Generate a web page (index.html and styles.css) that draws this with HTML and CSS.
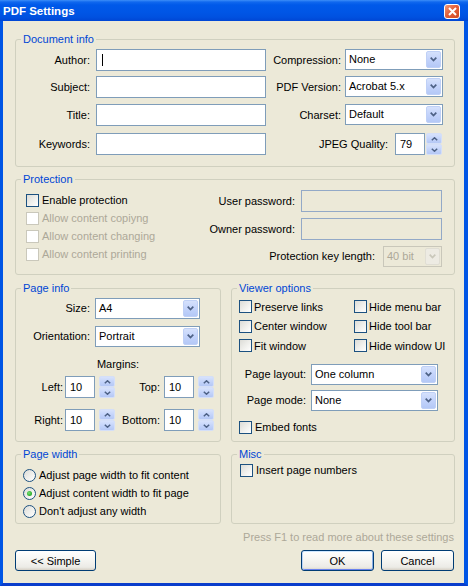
FILE: index.html
```html
<!DOCTYPE html>
<html>
<head>
<meta charset="utf-8">
<title>PDF Settings</title>
<link rel="stylesheet" href="styles.css">
</head>
<body>
<div class="window">
  <div class="titlebar">
    <span class="title">PDF Settings</span>
    <span class="close"><svg width="9" height="9" viewBox="0 0 9 9"><path d="M1 1 L8 8 M8 1 L1 8" stroke="#fff" stroke-width="2" fill="none"/></svg></span>
  </div>
  <div class="frame">
    <fieldset class="group">
      <legend>Document info</legend>
      <div class="doc-grid">
        <span class="lbl l1">Author:</span>
        <div class="edit"><span class="caret"></span></div>
        <span class="lbl l2">Compression:</span>
        <div class="combo"><span class="val">None</span><span class="drop"><svg width="7" height="5" viewBox="0 0 7 5"><path d="M0.7 0.7 L3.5 3.6 L6.3 0.7" stroke="#4D6185" stroke-width="1.7" fill="none"/></svg></span></div>

        <span class="lbl l1">Subject:</span>
        <div class="edit"></div>
        <span class="lbl l2">PDF Version:</span>
        <div class="combo"><span class="val">Acrobat 5.x</span><span class="drop"><svg width="7" height="5" viewBox="0 0 7 5"><path d="M0.7 0.7 L3.5 3.6 L6.3 0.7" stroke="#4D6185" stroke-width="1.7" fill="none"/></svg></span></div>

        <span class="lbl l1">Title:</span>
        <div class="edit"></div>
        <span class="lbl l2">Charset:</span>
        <div class="combo"><span class="val">Default</span><span class="drop"><svg width="7" height="5" viewBox="0 0 7 5"><path d="M0.7 0.7 L3.5 3.6 L6.3 0.7" stroke="#4D6185" stroke-width="1.7" fill="none"/></svg></span></div>

        <span class="lbl l1">Keywords:</span>
        <div class="edit"></div>
        <div class="jpeg">
          <span class="lbl">JPEG Quality:</span>
          <div class="edit num">79</div>
          <div class="spin">
            <span class="sb"><svg width="7" height="4" viewBox="0 0 7 4"><path d="M0.8 3.3 L3.5 0.8 L6.2 3.3" stroke="#4D6185" stroke-width="1.5" fill="none"/></svg></span>
            <span class="sb"><svg width="7" height="4" viewBox="0 0 7 4"><path d="M0.8 0.7 L3.5 3.2 L6.2 0.7" stroke="#4D6185" stroke-width="1.5" fill="none"/></svg></span>
          </div>
        </div>
      </div>
    </fieldset>

    <fieldset class="group prot">
      <legend>Protection</legend>
      <div class="prot-body">
        <div class="prot-left">
          <div class="chk"><span class="cb"></span><span>Enable protection</span></div>
          <div class="chk dis"><span class="cb"></span><span>Allow content copiyng</span></div>
          <div class="chk dis"><span class="cb"></span><span>Allow content changing</span></div>
          <div class="chk dis"><span class="cb"></span><span>Allow content printing</span></div>
        </div>
        <div class="prot-right">
          <span class="lbl">User password:</span>
          <div class="edit disabled"></div>
          <span class="lbl">Owner password:</span>
          <div class="edit disabled"></div>
          <div class="keylen">
            <span class="lbl">Protection key length:</span>
            <div class="combo disabled"><span class="val">40 bit</span><span class="drop"><svg width="7" height="5" viewBox="0 0 7 5"><path d="M0.7 0.7 L3.5 3.6 L6.3 0.7" stroke="#C9C7BA" stroke-width="1.7" fill="none"/></svg></span></div>
          </div>
        </div>
      </div>
    </fieldset>

    <div class="row mid">
      <fieldset class="group">
        <legend>Page info</legend>
        <div class="pi-body">
          <div class="pi-grid">
            <span class="lbl">Size:</span>
            <div class="combo"><span class="val">A4</span><span class="drop"><svg width="7" height="5" viewBox="0 0 7 5"><path d="M0.7 0.7 L3.5 3.6 L6.3 0.7" stroke="#4D6185" stroke-width="1.7" fill="none"/></svg></span></div>
            <span class="lbl">Orientation:</span>
            <div class="combo"><span class="val">Portrait</span><span class="drop"><svg width="7" height="5" viewBox="0 0 7 5"><path d="M0.7 0.7 L3.5 3.6 L6.3 0.7" stroke="#4D6185" stroke-width="1.7" fill="none"/></svg></span></div>
          </div>
          <div class="margins-title">Margins:</div>
          <div class="margins-grid">
            <span class="lbl">Left:</span>
            <div class="edit num">10</div>
            <div class="spin">
              <span class="sb"><svg width="7" height="4" viewBox="0 0 7 4"><path d="M0.8 3.3 L3.5 0.8 L6.2 3.3" stroke="#4D6185" stroke-width="1.5" fill="none"/></svg></span>
              <span class="sb"><svg width="7" height="4" viewBox="0 0 7 4"><path d="M0.8 0.7 L3.5 3.2 L6.2 0.7" stroke="#4D6185" stroke-width="1.5" fill="none"/></svg></span>
            </div>
            <span class="lbl">Top:</span>
            <div class="edit num">10</div>
            <div class="spin">
              <span class="sb"><svg width="7" height="4" viewBox="0 0 7 4"><path d="M0.8 3.3 L3.5 0.8 L6.2 3.3" stroke="#4D6185" stroke-width="1.5" fill="none"/></svg></span>
              <span class="sb"><svg width="7" height="4" viewBox="0 0 7 4"><path d="M0.8 0.7 L3.5 3.2 L6.2 0.7" stroke="#4D6185" stroke-width="1.5" fill="none"/></svg></span>
            </div>
            <span class="lbl">Right:</span>
            <div class="edit num">10</div>
            <div class="spin">
              <span class="sb"><svg width="7" height="4" viewBox="0 0 7 4"><path d="M0.8 3.3 L3.5 0.8 L6.2 3.3" stroke="#4D6185" stroke-width="1.5" fill="none"/></svg></span>
              <span class="sb"><svg width="7" height="4" viewBox="0 0 7 4"><path d="M0.8 0.7 L3.5 3.2 L6.2 0.7" stroke="#4D6185" stroke-width="1.5" fill="none"/></svg></span>
            </div>
            <span class="lbl">Bottom:</span>
            <div class="edit num">10</div>
            <div class="spin">
              <span class="sb"><svg width="7" height="4" viewBox="0 0 7 4"><path d="M0.8 3.3 L3.5 0.8 L6.2 3.3" stroke="#4D6185" stroke-width="1.5" fill="none"/></svg></span>
              <span class="sb"><svg width="7" height="4" viewBox="0 0 7 4"><path d="M0.8 0.7 L3.5 3.2 L6.2 0.7" stroke="#4D6185" stroke-width="1.5" fill="none"/></svg></span>
            </div>
          </div>
        </div>
      </fieldset>

      <fieldset class="group">
        <legend>Viewer options</legend>
        <div class="vo-body">
          <div class="vo-checks">
            <div class="chk"><span class="cb"></span><span>Preserve links</span></div>
            <div class="chk"><span class="cb"></span><span>Hide menu bar</span></div>
            <div class="chk"><span class="cb"></span><span>Center window</span></div>
            <div class="chk"><span class="cb"></span><span>Hide tool bar</span></div>
            <div class="chk"><span class="cb"></span><span>Fit window</span></div>
            <div class="chk"><span class="cb"></span><span>Hide window UI</span></div>
          </div>
          <div class="vo-combos">
            <span class="lbl">Page layout:</span>
            <div class="combo"><span class="val">One column</span><span class="drop"><svg width="7" height="5" viewBox="0 0 7 5"><path d="M0.7 0.7 L3.5 3.6 L6.3 0.7" stroke="#4D6185" stroke-width="1.7" fill="none"/></svg></span></div>
            <span class="lbl">Page mode:</span>
            <div class="combo"><span class="val">None</span><span class="drop"><svg width="7" height="5" viewBox="0 0 7 5"><path d="M0.7 0.7 L3.5 3.6 L6.3 0.7" stroke="#4D6185" stroke-width="1.7" fill="none"/></svg></span></div>
          </div>
          <div class="chk embed"><span class="cb"></span><span>Embed fonts</span></div>
        </div>
      </fieldset>
    </div>

    <div class="row bot">
      <fieldset class="group">
        <legend>Page width</legend>
        <div class="pw-body">
          <div class="rad"><span class="rb"></span><span>Adjust page width to fit content</span></div>
          <div class="rad"><span class="rb on"></span><span>Adjust content width to fit page</span></div>
          <div class="rad"><span class="rb"></span><span>Don't adjust any width</span></div>
        </div>
      </fieldset>
      <fieldset class="group">
        <legend>Misc</legend>
        <div class="misc-body">
          <div class="chk"><span class="cb"></span><span>Insert page numbers</span></div>
        </div>
      </fieldset>
    </div>

    <div class="hint">Press F1 to read more about these settings</div>

    <div class="buttons">
      <button class="btn simple">&lt;&lt; Simple</button>
      <div class="btn-right">
        <button class="btn ok">OK</button>
        <button class="btn">Cancel</button>
      </div>
    </div>
  </div>
</div>
</body>
</html>
```

FILE: styles.css
```css
* { box-sizing: border-box; }

body {
  margin: 0;
  font: 11px "Liberation Sans", Arial, sans-serif;
  color: #000;
  background: #ECE9D8;
}

.window {
  width: 468px;
  height: 586px;
  display: flex;
  flex-direction: column;
  background: #ECE9D8;
}

/* ---------- title bar ---------- */
.titlebar {
  flex: none;
  height: 21px;
  display: flex;
  align-items: center;
  padding: 1px 0 0 3px;
  background: linear-gradient(180deg, #3D8EF8 0px, #1068EE 2px, #0059E9 5px, #0056E6 12px, #0051E0 17px, #0046D4 21px);
}

.title {
  color: #fff;
  font-weight: bold;
  font-size: 11.5px;
}

.close {
  margin-left: auto;
  margin-right: 8px;
  width: 16px;
  height: 15px;
  border: 1px solid #fff;
  border-radius: 3px;
  background: linear-gradient(135deg, #F09A78 0%, #E4603A 45%, #D04A22 100%);
  display: flex;
  align-items: center;
  justify-content: center;
}

/* ---------- frame / client ---------- */
.frame {
  flex: 1;
  display: flex;
  flex-direction: column;
  border-left: 3px solid #0055E5;
  border-right: 4px solid #0055E5;
  border-bottom: 3px solid #0A3DCC;
  padding: 12px 9px 0 12px;
}

/* ---------- group boxes ---------- */
.group {
  margin: 0;
  padding: 0;
  min-inline-size: 0;
  border: 1px solid #D0D0BF;
  border-radius: 3px;
}

.group legend {
  margin-left: 5px;
  padding: 0 2px;
  color: #0046D5;
  line-height: 13px;
  font-size: 11px;
}

.lbl {
  white-space: nowrap;
  line-height: 22px;
  text-align: right;
}

/* ---------- fields ---------- */
.edit {
  height: 22px;
  border: 1px solid #7F9DB9;
  background: #fff;
  display: flex;
  align-items: center;
  padding-left: 5px;
}

.edit.num { padding-left: 4px; }

.edit.disabled {
  background: #ECE9D8;
  border-color: #93A9C7;
}

.caret {
  width: 1px;
  height: 12px;
  background: #000;
}

.combo {
  height: 21px;
  border: 1px solid #7F9DB9;
  background: #fff;
  display: flex;
  align-items: stretch;
}

.combo .val {
  flex: 1;
  padding-left: 3px;
  line-height: 19px;
  white-space: nowrap;
  overflow: hidden;
}

.drop {
  flex: none;
  width: 15px;
  margin: 1px 1px 1px 0;
  border: 1px solid #BFD0F6;
  border-radius: 2px;
  background: linear-gradient(180deg, #D5E1FC 0%, #C3D3FB 50%, #B4C8F6 100%);
  display: flex;
  align-items: center;
  justify-content: center;
}

.combo.disabled {
  border-color: #C9C7BA;
  background: #ECE9D8;
  color: #ACA899;
}

.combo.disabled .drop {
  border-color: #E0DED4;
  background: #EDEBE3;
}

.spin {
  width: 16px;
  height: 22px;
  display: flex;
  flex-direction: column;
}

.sb {
  flex: 1;
  border: 1px solid #D4DFF8;
  border-radius: 2px;
  background: linear-gradient(180deg, #D7E2FC 0%, #C1D2FA 60%, #B5C8F5 100%);
  display: flex;
  align-items: center;
  justify-content: center;
}

/* ---------- check / radio ---------- */
.chk, .rad {
  display: flex;
  align-items: center;
  gap: 3px;
  white-space: nowrap;
}

.cb {
  flex: none;
  width: 13px;
  height: 13px;
  border: 1px solid #1C5180;
  background: linear-gradient(135deg, #DCDCD7 0%, #F2F2EF 60%, #FFFFFF 100%);
}

.chk.dis { color: #ACA899; }
.chk.dis .cb {
  border-color: #CAC8BB;
  background: #fff;
}

.rb {
  flex: none;
  width: 13px;
  height: 13px;
  border-radius: 50%;
  border: 1px solid #1C5180;
  background: linear-gradient(135deg, #DCDCD7 0%, #F2F2EF 60%, #FFFFFF 100%);
  display: flex;
  align-items: center;
  justify-content: center;
}

.rb.on::after {
  content: "";
  width: 5px;
  height: 5px;
  border-radius: 50%;
  background: radial-gradient(circle at 40% 40%, #7BE07A 0%, #35B535 55%, #1E8E1E 100%);
}

/* ---------- document info ---------- */
.doc-grid {
  display: grid;
  grid-template-columns: 80px 170px 79px 98px;
  grid-template-rows: 27px 28px 29px 22px;
  align-items: start;
  padding: 3px 0 11px 0;
}

.doc-grid .l1 { padding-right: 6px; }
.doc-grid .l2 { padding-right: 4px; }

.jpeg {
  grid-column: 3 / 5;
  display: flex;
  justify-content: flex-end;
  align-items: center;
  padding-right: 1px;
}

.jpeg .edit { width: 30px; margin-left: 7px; }
.jpeg .spin { margin-left: 1px; }

/* ---------- protection ---------- */
.prot { margin-top: 6px; }

.prot-body {
  display: flex;
  padding: 4px 12px 7px 10px;
}

.prot-left { padding-top: 1px; }
.prot-left .chk { height: 18px; }

.prot-right {
  margin-left: auto;
  display: grid;
  grid-template-columns: auto 141px;
  column-gap: 6px;
  row-gap: 6px;
  align-items: center;
}

.keylen {
  grid-column: 1 / -1;
  justify-self: end;
  display: flex;
  align-items: center;
  gap: 8px;
  margin-top: -1px;
}

.keylen .combo { width: 59px; }

/* ---------- rows of groups ---------- */
.row {
  display: grid;
  grid-template-columns: 206px 224px;
  column-gap: 10px;
}

.mid { margin-top: 7px; }
.bot { margin-top: 6px; }

/* page info */
.pi-body { padding: 3px 0 10px 0; }

.pi-grid {
  display: grid;
  grid-template-columns: 79px 105px;
  row-gap: 7px;
}

.pi-grid .lbl { padding-right: 5px; line-height: 21px; }

.margins-title {
  margin-top: 11px;
  line-height: 13px;
  text-align: center;
}

.margins-grid {
  margin-top: 5px;
  display: grid;
  grid-template-columns: 49px 30px 20px 49px 30px 20px;
  row-gap: 11px;
  align-items: center;
}

.margins-grid .lbl { padding-right: 2px; }
.margins-grid .lbl:nth-child(4),
.margins-grid .lbl:nth-child(10) { padding-right: 4px; }
.margins-grid .spin { justify-self: end; }

/* viewer options */
.vo-body { padding: 2px 0 4px 7px; }

.vo-checks {
  display: grid;
  grid-template-columns: 115px auto;
  grid-auto-rows: 19.5px;
}

.vo-checks .chk { gap: 2px; }

.vo-combos {
  margin-top: 8px;
  display: grid;
  grid-template-columns: 72px 127px;
  row-gap: 5px;
}

.vo-combos .lbl { padding-right: 5px; line-height: 21px; }

.embed { margin-top: 7px; height: 19px; }

/* page width */
.pw-body { padding: 5px 0 3px 7px; }
.pw-body .rad { height: 18px; }

/* misc */
.misc-body { padding: 0 0 0 8px; }
.misc-body .chk { height: 18px; }

/* ---------- footer ---------- */
.hint {
  margin-top: 7px;
  line-height: 13px;
  text-align: right;
  color: #ACA899;
  padding-right: 1px;
}

.buttons {
  margin-top: 6px;
  display: flex;
  padding-right: 1px;
}

.btn-right {
  margin-left: auto;
  display: flex;
  gap: 7px;
}

.btn {
  height: 21px;
  width: 73px;
  padding: 0;
  font: 11px "Liberation Sans", Arial, sans-serif;
  color: #000;
  border: 1px solid #003C74;
  border-radius: 3px;
  background: linear-gradient(180deg, #FFFFFF 0%, #F7F7F4 40%, #ECEBE6 85%, #D6D0C5 100%);
}

.btn.simple { width: 81px; }

.btn.ok {
  box-shadow: inset 0 1px 0 #CEE7FF, inset 1px 0 0 #BCD4F6, inset -1px 0 0 #89ADE4, inset 0 -1px 0 #6982EE;
}
```
